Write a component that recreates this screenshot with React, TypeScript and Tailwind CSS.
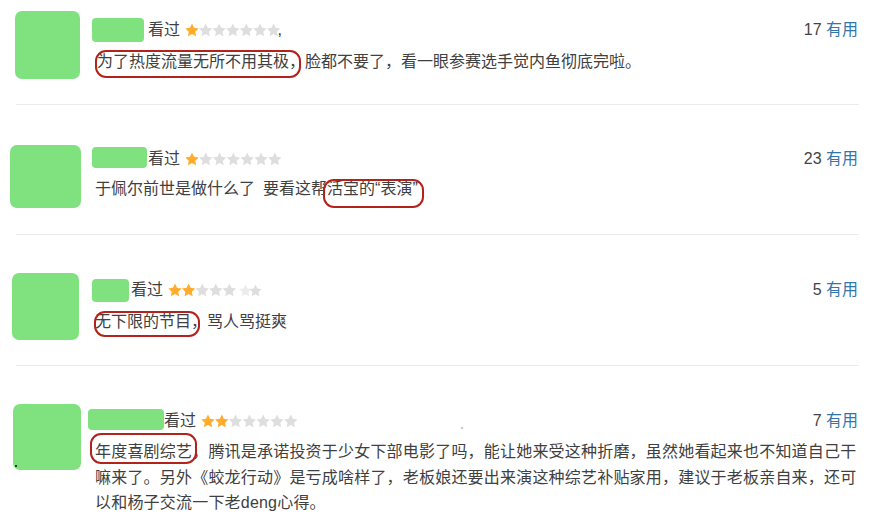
import React from "react";

const ORANGE = "#ffac2d";
const GRAY = "#dedede";

function starPoints(cx: number, cy: number, r: number, ir: number) {
  const pts: string[] = [];
  for (let i = 0; i < 10; i++) {
    const rad = i % 2 === 0 ? r : ir;
    const a = -Math.PI / 2 + (i * Math.PI) / 5;
    pts.push(`${(cx + rad * Math.cos(a)).toFixed(2)},${(cy + rad * Math.sin(a)).toFixed(2)}`);
  }
  return pts.join(" ");
}

function Stars({ colors, step = 13.6, size = 14 }: { colors: string[]; step?: number; size?: number }) {
  const w = step * (colors.length - 1) + size;
  return (
    <svg width={w} height={size} viewBox={`0 0 ${w} ${size}`} className="shrink-0">
      {colors.map((c, i) => (
        <polygon key={i} points={starPoints(i * step + size / 2, size / 2 + 0.6, size / 2, size / 4.1)} fill={c} />
      ))}
    </svg>
  );
}

function Mark({ children, box }: { children: React.ReactNode; box: string }) {
  return (
    <span className="relative inline-block">
      {children}
      <span className={`pointer-events-none absolute rounded-[11px] border-2 border-[#b3221b] ${box}`} />
    </span>
  );
}

function Useful({ n }: { n: string }) {
  return (
    <span className="ml-auto whitespace-nowrap text-[#444]">
      {n} <span className="text-[#3377aa]">有用</span>
    </span>
  );
}

function Divider() {
  return <div className="ml-[16px] h-px w-[843px] bg-[#ebebeb]" />;
}

export default function App() {
  return (
    <div
      className="h-[516px] w-[891px] overflow-hidden bg-white text-[16px] leading-[26px] text-[#404040]"
      style={{ fontFamily: '"Liberation Sans", "Noto Sans CJK SC", sans-serif' }}
    >
      {/* Row 1 */}
      <div className="flex h-[104px]">
        <div className="ml-[15px] mt-[11px] h-[68px] w-[65px] shrink-0 rounded-[7px] bg-[#80e27e]" />
        <div className="ml-[12px] mr-[33px] flex-1 pt-[18px]">
          <div className="flex h-[24px] items-center">
            <div className="h-[24px] w-[52px] shrink-0 rounded-[4px] bg-[#80e27e]" />
            <span className="ml-[4px]">看过</span>
            <span className="ml-[5px] flex items-center">
              <Stars colors={[ORANGE, GRAY, GRAY, GRAY, GRAY, GRAY, GRAY]} step={13.6} size={14} />
              <span className="-ml-[3px] text-[#333]">,</span>
            </span>
            <Useful n="17" />
          </div>
          <div className="mt-[7px] whitespace-nowrap pl-[5px]">
            <Mark box="-left-[2px] right-[4px] top-[1px] -bottom-[3px]">为了热度流量无所不用其极，</Mark>
            脸都不要了，看一眼参赛选手觉内鱼彻底完啦。
          </div>
        </div>
      </div>
      <Divider />

      {/* Row 2 */}
      <div className="flex h-[129px]">
        <div className="ml-[10px] mt-[40px] h-[63px] w-[71px] shrink-0 rounded-[7px] bg-[#80e27e]" />
        <div className="ml-[11px] mr-[33px] flex-1 pt-[42px]">
          <div className="flex h-[24px] items-center">
            <div className="-mt-[3px] h-[21px] w-[55px] shrink-0 rounded-[4px] bg-[#80e27e]" />
            <span className="ml-[1px]">看过</span>
            <span className="ml-[5px] flex items-center">
              <Stars colors={[ORANGE, GRAY, GRAY, GRAY, GRAY, GRAY, GRAY]} step={13.8} size={14} />
            </span>
            <Useful n="23" />
          </div>
          <div className="mt-[5px] whitespace-nowrap pl-[3px]">
            于佩尔前世是做什么了<span className="inline-block w-[8px]"> </span>要看这帮
            <Mark box="-left-[4px] -right-[6px] top-[3px] -bottom-[6px]">
              活宝的<span className="text-[#333]">“</span>表演<span className="text-[#333]">”</span>
            </Mark>
          </div>
        </div>
      </div>
      <Divider />

      {/* Row 3 */}
      <div className="flex h-[130px]">
        <div className="ml-[12px] mt-[38px] h-[67px] w-[67px] shrink-0 rounded-[7px] bg-[#80e27e]" />
        <div className="ml-[13px] mr-[33px] flex-1 pt-[43px]">
          <div className="flex h-[24px] items-center">
            <div className="h-[23px] w-[37px] shrink-0 rounded-[4px] bg-[#80e27e]" />
            <span className="ml-[2px]">看过</span>
            <span className="ml-[5px] flex items-center">
              <Stars colors={[ORANGE, ORANGE, GRAY, GRAY, GRAY]} step={13.6} size={14} />
              <span className="ml-[3px] flex">
                <Stars colors={["#ececec", GRAY]} step={10} size={13} />
              </span>
            </span>
            <Useful n="5" />
          </div>
          <div className="mt-[7px] whitespace-nowrap pl-[3px]">
            <Mark box="-left-[1px] right-[7px] top-[2px] -bottom-[2px]">无下限的节目，</Mark>
            骂人骂挺爽
          </div>
        </div>
      </div>
      <Divider />

      {/* Row 4 */}
      <div className="flex h-[150px]">
        <div className="relative ml-[13px] mt-[38px] h-[66px] w-[68px] shrink-0 rounded-[7px] bg-[#80e27e]">
          <span className="absolute bottom-[3px] left-[2px] h-[2px] w-[2px] bg-[#333]" />
        </div>
        <div className="ml-[7px] mr-[33px] flex-1 pt-[43px]">
          <div className="flex h-[24px] items-center">
            <div className="-mt-[3px] h-[21px] w-[76px] shrink-0 rounded-[4px] bg-[#80e27e]" />
            <span>看过</span>
            <span className="ml-[5px] flex items-center">
              <Stars colors={[ORANGE, ORANGE, GRAY, GRAY, GRAY, GRAY, GRAY]} step={13.8} size={14} />
            </span>
            <span className="ml-[163px] mt-[14px] h-[2px] w-[2px] bg-[#c8c8c8]" />
            <Useful n="7" />
          </div>
          <div className="mt-[6px] whitespace-nowrap pl-[7px] leading-[25.5px] tracking-[0.2px]">
            <Mark box="-left-[5px] -right-[5px] -top-[6px] bottom-[1px]">年度喜剧综艺</Mark>
            ，腾讯是承诺投资于少女下部电影了吗，能让她来受这种折磨，虽然她看起来也不知道自己干
            <br />
            嘛来了。另外《蛟龙行动》是亏成啥样了，老板娘还要出来演这种综艺补贴家用，建议于老板亲自来，还可
            <br />
            以和杨子交流一下老deng心得。
          </div>
        </div>
      </div>
    </div>
  );
}
